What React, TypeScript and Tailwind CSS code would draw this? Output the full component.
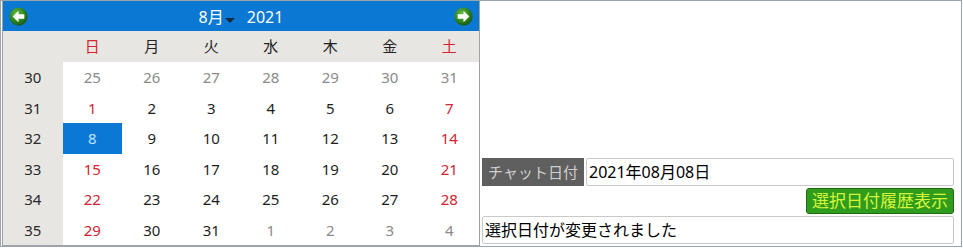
import React from "react";

const FONT = { fontFamily: '"Noto Sans", "Noto Sans CJK JP", sans-serif' };

function Arrow({ dir }: { dir: "left" | "right" }) {
  const id = `g-${dir}`;
  return (
    <svg width="19" height="19" viewBox="0 0 18 18">
      <defs>
        <radialGradient id={id} cx="40%" cy="35%" r="65%">
          <stop offset="0%" stopColor="#6dbb4a" />
          <stop offset="60%" stopColor="#2f8a22" />
          <stop offset="100%" stopColor="#1b5a12" />
        </radialGradient>
      </defs>
      <circle cx="9" cy="9" r="8.6" fill={`url(#${id})`} />
      <g transform={dir === "right" ? "translate(18,0) scale(-1,1)" : undefined}>
        <path d="M3.5 9 L9 3.5 L9 6.8 L14.5 6.8 L14.5 11.2 L9 11.2 L9 14.5 Z" fill="#ffffff" />
      </g>
    </svg>
  );
}

type Cell = { d: number; kind: "other" | "normal" | "red" | "sel" };

const weeks: { wk: number; days: Cell[] }[] = [
  { wk: 30, days: [25, 26, 27, 28, 29, 30, 31].map((d) => ({ d, kind: "other" as const })) },
  { wk: 31, days: [1, 2, 3, 4, 5, 6, 7].map((d, i) => ({ d, kind: i === 0 || i === 6 ? ("red" as const) : ("normal" as const) })) },
  { wk: 32, days: [8, 9, 10, 11, 12, 13, 14].map((d, i) => ({ d, kind: i === 0 ? ("sel" as const) : i === 6 ? ("red" as const) : ("normal" as const) })) },
  { wk: 33, days: [15, 16, 17, 18, 19, 20, 21].map((d, i) => ({ d, kind: i === 0 || i === 6 ? ("red" as const) : ("normal" as const) })) },
  { wk: 34, days: [22, 23, 24, 25, 26, 27, 28].map((d, i) => ({ d, kind: i === 0 || i === 6 ? ("red" as const) : ("normal" as const) })) },
  {
    wk: 35,
    days: [29, 30, 31, 1, 2, 3, 4].map((d, i) => ({
      d,
      kind: i === 0 ? ("red" as const) : i >= 3 ? ("other" as const) : ("normal" as const),
    })),
  },
];

const dows = ["日", "月", "火", "水", "木", "金", "土"];

function cellClass(kind: Cell["kind"]) {
  switch (kind) {
    case "other":
      return "text-[#8a8a8a]";
    case "red":
      return "text-[#d42431]";
    case "sel":
      return "bg-[#0b78d6] text-[#bfe2ff]";
    default:
      return "text-[#1e1e1e]";
  }
}

export default function App() {
  return (
    <div className="w-[963px] h-[250px] bg-white" style={FONT}>
      <div className="w-[962px] h-[247px] border border-[#9aa4ad] flex">
        {/* Calendar */}
        <div className="ml-[1px] w-[478px] h-[245px] border-l border-r border-b border-[#a2a2a2] flex flex-col">
          <div className="h-[30px] bg-[#0b78d4] flex items-center justify-between px-[6px] pt-[1px]">
            <Arrow dir="left" />
            <div className="flex items-center text-white text-[16px] leading-none">
              <span>8月</span>
              <svg width="10" height="6" viewBox="0 0 10 6" className="mt-[9px] ml-[1px]">
                <path d="M0 0 L10 0 L5 5 Z" fill="#1b2a3a" />
              </svg>
              <span className="ml-[12px]">2021</span>
            </div>
            <Arrow dir="right" />
          </div>
          <div className="grid grid-cols-8 h-[31px] bg-[#e8e6e3] text-[15px]">
            <div />
            {dows.map((d, i) => (
              <div
                key={d}
                className={`flex items-center justify-center ${i === 0 || i === 6 ? "text-[#d42431]" : "text-[#222]"}`}
              >
                {d}
              </div>
            ))}
          </div>
          <div className="flex-1 grid grid-rows-6">
            {weeks.map((w) => (
              <div key={w.wk} className="grid grid-cols-8 text-[15px]">
                <div className="bg-[#e8e6e3] flex items-center justify-center text-[#2a2a2a]">{w.wk}</div>
                {w.days.map((c, i) => (
                  <div key={i} className={`flex items-center justify-center ${cellClass(c.kind)}`}>
                    {c.d}
                  </div>
                ))}
              </div>
            ))}
          </div>
        </div>
        {/* Right panel */}
        <div className="flex-1 flex flex-col justify-end pl-[2px] pr-[7px] pb-[2px]">
          <div className="flex h-[28px] gap-[2px]">
            <div className="w-[102px] bg-[#5f5f5f] text-[#cfcfcf] text-[15px] flex items-center justify-center">
              チャット日付
            </div>
            <div className="flex-1 border border-[#c9c9c9] rounded-[2px] bg-white text-[16px] text-black flex items-center px-[2px]">
              2021年08月08日
            </div>
          </div>
          <div className="flex justify-end mt-[2px]">
            <div className="w-[148px] h-[26px] bg-[#2f9c1e] border border-[#1e6c12] rounded-[3px] text-[#d6f53a] text-[17px] flex items-center justify-center">
              選択日付履歴表示
            </div>
          </div>
          <div className="mt-[2px] h-[28px] border border-[#c9c9c9] rounded-[2px] bg-white text-[16px] text-black flex items-center px-[2px]">
            選択日付が変更されました
          </div>
        </div>
      </div>
    </div>
  );
}
